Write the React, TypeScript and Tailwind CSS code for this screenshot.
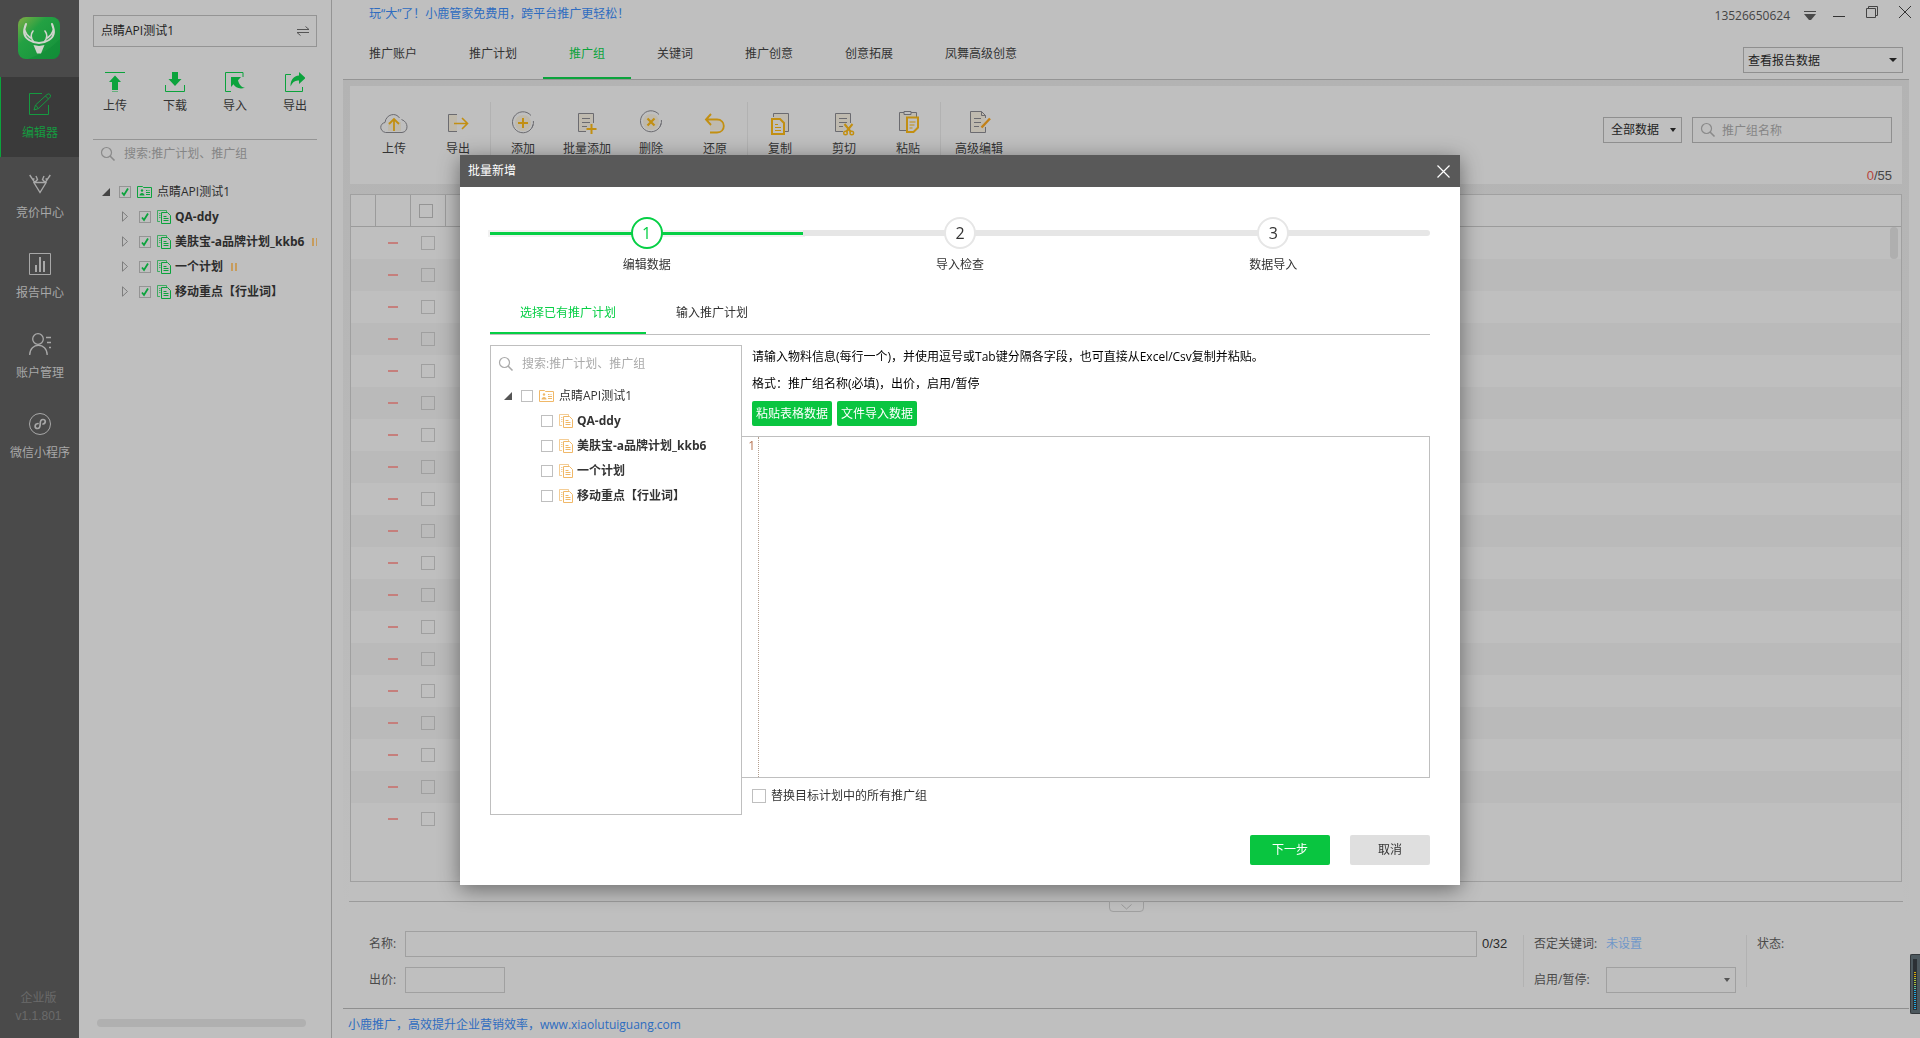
import type { ReactNode } from 'react';

/* ---------- shared pieces ---------- */

function Caret({ small = false, className = '' }: { small?: boolean; className?: string }) {
  return (
    <svg viewBox="0 0 8 4" className={`pointer-events-none ${small ? 'h-1 w-1.5' : 'h-1 w-2'} ${className}`} preserveAspectRatio="none" aria-hidden="true">
      <path d="M0 0h8L4 4z" fill="currentColor" />
    </svg>
  );
}

function SearchIcon({ className = '' }: { className?: string }) {
  return (
    <svg viewBox="0 0 16 16" className={`size-4 shrink-0 ${className}`} fill="none" stroke="currentColor" aria-hidden="true">
      <circle cx="6.5" cy="6.5" r="5" strokeWidth="1.2" />
      <path d="M10 10l4.5 4.5" strokeWidth="1.6" />
    </svg>
  );
}

function CheckBox({ label, checked = false, className }: { label: string; checked?: boolean; className: string }) {
  return (
    <span className="grid shrink-0 place-items-center">
      <input
        type="checkbox"
        aria-label={label}
        defaultChecked={checked}
        className={`col-start-1 row-start-1 block appearance-none border ${className}`}
      />
      {checked && (
        <svg viewBox="0 0 12 12" className="pointer-events-none col-start-1 row-start-1 size-3" fill="none" stroke="#0ba33c" aria-hidden="true">
          <path d="M3 6.5L5 9l4-6.500" strokeWidth="1.8" />
        </svg>
      )}
    </span>
  );
}

function AccountIcon() {
  return (
    <svg viewBox="0 0 15 12" className="h-3 w-[15px] shrink-0" fill="none" stroke="currentColor" aria-hidden="true">
      <path d="M.5 .5h5l1 1h8v10H.5z" />
      <circle cx="5" cy="4.500" r="1.200" fill="currentColor" stroke="none" />
      <path d="M2.500 9.500c0-3.500 5-3.500 5 0z" fill="currentColor" stroke="none" />
      <path d="M9 4.500h1.500M11.500 4.500h1M9 6.500h4M9 8.500h4" />
    </svg>
  );
}

function PlanIcon() {
  return (
    <svg viewBox="0 0 14 14" className="size-3.5 shrink-0" fill="none" stroke="currentColor" aria-hidden="true">
      <path d="M9.500 2V.5H.5v11H3M2 3.500h1.500M2 5.500h1.500M2 7.500h1.500" opacity=".7" />
      <path d="M4.500 2.500h6l3 3v8h-9z" />
      <path d="M6.500 6.500h3M6.500 8.500h5M6.500 10.500h5" />
    </svg>
  );
}

function Pause() {
  return (
    <svg viewBox="0 0 6 8" className="ml-2 h-2 w-1.5 shrink-0" aria-hidden="true">
      <path d="M0 0h2v8H0zM4 0h2v8H4z" fill="#c79c5c" />
    </svg>
  );
}

const plans = [
  { name: 'QA-ddy', paused: false },
  { name: '美肤宝-a品牌计划_kkb6', paused: true },
  { name: '一个计划', paused: true },
  { name: '移动重点【行业词】', paused: false },
];

/* ---------- dark navigation rail ---------- */

function NavItem({ label, active = false, children }: { label: string; active?: boolean; children: ReactNode }) {
  return (
    <button
      className={`flex h-20 w-full flex-col items-center gap-[9px] border-l pt-4 ${
        active ? 'border-[#0ba33c] bg-[#3a3a3a] text-[#159a40]' : 'border-transparent text-[#a8a8a8]'
      }`}
    >
      <svg viewBox="0 0 22 22" className="size-[22px]" fill="none" stroke="currentColor" aria-hidden="true">
        {children}
      </svg>
      <span>{label}</span>
    </button>
  );
}

function Rail() {
  return (
    <nav className="flex w-[79px] shrink-0 flex-col bg-[#4a4a4a]">
      <div className="flex h-[77px] justify-center pt-[17px] pr-px">
        <svg viewBox="0 0 42 42" className="size-[42px]" aria-label="小鹿推广">
          <defs>
            <linearGradient id="logo" x1="0" y1="0" x2="1" y2="1">
              <stop offset="0" stopColor="#84ad45" />
              <stop offset=".35" stopColor="#23a143" />
              <stop offset="1" stopColor="#149039" />
            </linearGradient>
          </defs>
          <rect width="42" height="42" rx="8" fill="url(#logo)" />
          <path d="M42 22C32 32 24 37 10 42h24a8 8 0 0 0 8-8z" fill="#0f8a35" opacity=".5" />
          <g fill="none" stroke="#d0d4cc" strokeWidth="2" strokeLinecap="round">
            <path d="M8 7c-3 7-2 13 3 16 3 2 6 3 10 3s7-1 10-3c5-3 6-9 3-16" />
            <path d="M15 14c-3 4-2.500 7 .5 10.500M27 14c3 4 2.500 7-.5 10.500M6.500 13c1.500 4 3 6 6 8M35.500 13c-1.500 4-3 6-6 8" strokeWidth="1.600" />
          </g>
          <path d="M15.500 28l5.500 1 5.500-1-3.500 8.500h-4z" fill="#d0d4cc" />
        </svg>
      </div>
      <NavItem label="编辑器" active>
        <path d="M13 .5H.5v21h19V12" />
        <path d="M5 17l1.500-5L18 1.500q2-1.500 3.200.2T20.500 5L9.500 15.500z" />
        <path d="M16.500 3l3 3M6.500 12l3 3.500" />
      </NavItem>
      <NavItem label="竞价中心">
        <path d="M4.500 9.500h13M4.500 9L11 19.500 17.500 9M.7 2l5 7.500 2.800-3L7 3M3 6h2.500M21.300 2l-5 7.500-2.800-3L15 3M19 6h-2.500" strokeWidth="1.400" />
      </NavItem>
      <NavItem label="报告中心">
        <path d="M.5 .5h21v21H.5z" />
        <path d="M7 12v7M11 4v15M15 8v11" strokeWidth="2" />
      </NavItem>
      <NavItem label="账户管理">
        <circle cx="9" cy="6" r="5.300" strokeWidth="1.300" />
        <path d="M.7 22c0-13 17.500-13 17.500 0M17 4.500h5M18 9.500h4M20 14.500h2" strokeWidth="1.300" />
      </NavItem>
      <NavItem label="微信小程序">
        <circle cx="11" cy="11" r="10.500" />
        <path d="M9 10.500c-4 .5-3.500 5 -.5 5 2 0 2.700-1.500 2.700-4.500S12 6.500 14 6.500c3 0 3 4 0 4.500" strokeWidth="1.700" strokeLinecap="round" />
      </NavItem>
      <div className="mt-auto flex flex-col items-center pr-0.5 pb-3.5 text-[#6a6a6a]">
        <span className="leading-5">企业版</span>
        <span className="font-['Liberation_Sans'] leading-4">v1.1.801</span>
      </div>
    </nav>
  );
}

/* ---------- account panel ---------- */

function PanelAction({ label, children }: { label: string; children: ReactNode }) {
  return (
    <button className="flex w-11 flex-col items-center gap-[5px] text-[#333]">
      <svg viewBox="0 0 20 20" className="size-5 text-[#0ba33c]" fill="none" stroke="currentColor" aria-hidden="true">
        {children}
      </svg>
      <span>{label}</span>
    </button>
  );
}

function AccountPanel() {
  return (
    <aside className="flex w-[253px] shrink-0 flex-col border-r border-[#949494] px-3.5 pt-[15px]">
      <button className="flex h-8 items-center justify-between border border-[#949494] px-[7px] text-[#222]">
        <span>点睛API测试1</span>
        <svg viewBox="0 0 12 10" className="h-2.5 w-3" fill="none" stroke="#555" aria-hidden="true">
          <path d="M0 3.500h12L8.500 .5M12 6.500H0l3.500 3" />
        </svg>
      </button>
      <div className="mt-[25px] flex h-[68px] justify-between border-b border-[#949494]">
        <PanelAction label="上传">
          <path d="M0 .5h20" />
          <path d="M7 18V10H4l6-6.500L16 10h-3v8zM7 19.500h6v.5H7z" fill="currentColor" stroke="none" />
        </PanelAction>
        <PanelAction label="下载">
          <path d="M.5 13v6.500h19V13" />
          <path d="M7 0h6v7h3.500L10 14 3.500 7H7z" fill="currentColor" stroke="none" />
        </PanelAction>
        <PanelAction label="导入">
          <path d="M18 5V.5H.5v19H6" />
          <path d="M6 5h10l-3 3.200c1 4 3 6.800 7 7.600-6 1.600-9.500-.3-11.500-3.500L6 15z" fill="currentColor" stroke="none" />
        </PanelAction>
        <PanelAction label="导出">
          <path d="M6 2.500H.5v17h17V15" />
          <path d="M14 0l6.500 6L14 12V8.500C10 8 7.500 10 5.500 14.500 5.500 8 8.500 4 14 3.600z" fill="currentColor" stroke="none" />
        </PanelAction>
      </div>
      <label className="flex h-7 items-center gap-2 pl-[7px] text-[#8a8a8a]">
        <SearchIcon />
        <input aria-label="搜索" placeholder="搜索:推广计划、推广组" className="min-w-0 flex-1 bg-transparent outline-none placeholder:text-[#858585]" />
      </label>
      <ul className="mt-[11px] overflow-hidden text-[#2c2c2c]">
        <li className="flex h-[25px] items-center pl-[9px]">
          <svg viewBox="0 0 8 8" className="mr-[9px] size-2" aria-hidden="true">
            <path d="M8 0v8H0z" fill="#444" />
          </svg>
          <CheckBox label="点睛API测试1" checked className="size-3 border-[#949494]" />
          <span className="ml-1.5 mr-[5px] text-[#0ba33c]">
            <AccountIcon />
          </span>
          <span>点睛API测试1</span>
        </li>
        {plans.map((p) => (
          <li key={p.name} className="flex h-[25px] items-center pl-[29px] font-bold whitespace-nowrap">
            <svg viewBox="0 0 6 11" className="mr-[11px] h-[11px] w-1.5 shrink-0" fill="none" stroke="#7d7d7d" aria-hidden="true">
              <path d="M.5 .8v9.400l5-4.700z" />
            </svg>
            <CheckBox label={p.name} checked className="size-3 border-[#949494]" />
            <span className="ml-1.5 mr-1 text-[#0ba33c]">
              <PlanIcon />
            </span>
            <span>{p.name}</span>
            {p.paused && <Pause />}
          </li>
        ))}
      </ul>
      <div className="mt-auto mr-[11px] mb-[11px] ml-1 h-2 rounded-full bg-[#b0b0b0]" />
    </aside>
  );
}

/* ---------- main area ---------- */

const tabs = ['推广账户', '推广计划', '推广组', '关键词', '推广创意', '创意拓展', '凤舞高级创意'];

function Tool({ label, wide = false, children }: { label: string; wide?: boolean; children: ReactNode }) {
  return (
    <button className={`flex flex-col items-center gap-1 pt-2 ${wide ? 'w-[76px]' : 'w-16'}`}>
      <svg viewBox="0 0 28 26" className="h-[26px] w-7" fill="none" stroke="#6b6b70" aria-hidden="true">
        {children}
      </svg>
      <span>{label}</span>
    </button>
  );
}

const gold = '#c28f12';
const sand = '#bfb59f';

function Toolbar() {
  return (
    <div className="mx-[7px] mt-1.5 flex h-[98px] justify-between bg-[#bfbfbf] text-[#333]">
      <div className="mt-4 flex h-[60px] divide-x divide-[#b2b2b2] pl-3">
        <div className="flex">
          <Tool label="上传">
            <path d="M8 22.500H5.500C-1 21-.5 13.500 5 12.500 6 4 16 2 19.500 8" />
            <path d="M21.500 9.500C29 12 28.500 22 22 22.500H8" />
            <path d="M8 12h13v9H8z" fill={sand} stroke="none" opacity=".6" />
            <path d="M14 21V9M9 14l5-5 5 5" stroke={gold} strokeWidth="1.800" />
          </Tool>
          <Tool label="导出">
            <path d="M13 4.500H4.500v17H13" fill={sand} fillOpacity=".6" />
            <path d="M10 13.500h13M18 8l5.500 5.500L18 19" stroke={gold} strokeWidth="1.600" />
          </Tool>
        </div>
        <div className="flex">
          <Tool label="添加">
            <circle cx="14" cy="13" r="8" fill={sand} stroke="none" opacity=".6" />
            <path d="M22 5.500a10.500 10.500 0 1 0 2.400 5.500M24 14.500a10 10 0 0 1-1 3" />
            <path d="M14 8v10M9 13h10" stroke={gold} strokeWidth="2" />
          </Tool>
          <Tool label="批量添加">
            <path d="M13 21.500H5.500v-18h15V13" fill={sand} fillOpacity=".5" />
            <path d="M9 8.500h8M9 12.500h8M9 16.500h5" />
            <path d="M18.500 14v10M13.500 19h10" stroke={gold} strokeWidth="2" />
          </Tool>
          <Tool label="删除">
            <circle cx="14" cy="12" r="8" fill={sand} stroke="none" opacity=".6" />
            <path d="M22 4.500a10.500 10.500 0 1 0 2.400 5.500M24 13.500a10 10 0 0 1-1 3" />
            <path d="M10.500 8.500l7 7M17.500 8.500l-7 7" stroke={gold} strokeWidth="2.200" />
          </Tool>
          <Tool label="还原">
            <path d="M9 11h12v9H9z" fill={sand} stroke="none" opacity=".5" />
            <path d="M10 4L5 9.500l5 5.500M5 9.500h11c9 0 9 13 0 13h-7" stroke={gold} strokeWidth="1.900" />
          </Tool>
        </div>
        <div className="flex">
          <Tool label="复制">
            <path d="M7.500 7V3.500h15v18H19" fill={sand} fillOpacity=".5" />
            <path d="M6 9h8l4 4v11H6z" stroke={gold} strokeWidth="2" fill="#bfbfbf" />
            <path d="M9 14.500h3M9 17.500h6M9 20.500h6" stroke={gold} strokeWidth="1.200" />
          </Tool>
          <Tool label="剪切">
            <path d="M13 21.500H5.500v-18h15V13" fill={sand} fillOpacity=".5" />
            <path d="M9 8.500h8M9 12.500h8M9 16.500h4" />
            <path d="M14.500 14l6.500 8M22.500 14L16 22" stroke={gold} strokeWidth="2" />
            <circle cx="15.500" cy="23" r="1.800" stroke={gold} strokeWidth="1.400" />
            <circle cx="21.800" cy="23" r="1.800" stroke={gold} strokeWidth="1.400" />
          </Tool>
          <Tool label="粘贴">
            <path d="M12 20.500H5.500v-18h17V7" fill={sand} fillOpacity=".5" />
            <path d="M10 4.500v-3h7v3z" fill="#bfbfbf" />
            <path d="M13 7.500h11v10l-4.500 4.500H13z" stroke={gold} strokeWidth="2" fill="#bfbfbf" />
            <path d="M15.500 12h6M15.500 15h5M15.500 18h3" stroke={gold} strokeWidth="1.200" />
          </Tool>
        </div>
        <div className="flex">
          <Tool label="高级编辑" wide>
            <path d="M20.500 17v5.500h-15v-21h11l4 4V8" fill={sand} fillOpacity=".5" />
            <path d="M16.500 1.500v4h4M9 8.500h7M9 12.500h7M9 16.500h5" />
            <path d="M25 8.500l-8.500 9" stroke="#c28018" strokeWidth="2.400" />
          </Tool>
        </div>
      </div>
      <div className="flex flex-col items-end justify-between pt-[31px] pr-2.5">
        <div className="flex gap-2.5">
          <div className="grid items-center">
            <select aria-label="数据范围" className="col-start-1 row-start-1 h-[26px] w-[79px] appearance-none border border-[#8f8f8f] px-[7px] text-[#222]">
              <option>全部数据</option>
            </select>
            <Caret small className="col-start-1 row-start-1 mr-1.5 justify-self-end text-[#222]" />
          </div>
          <label className="flex h-[26px] w-[200px] items-center gap-1.5 border border-[#8f8f8f] pl-[7px] text-[#8a8a8a]">
            <SearchIcon />
            <input aria-label="推广组名称" placeholder="推广组名称" className="min-w-0 flex-1 bg-transparent pt-px outline-none placeholder:text-[#858585]" />
          </label>
        </div>
        <div className="font-['Liberation_Sans'] text-[13px] leading-4 text-[#444]">
          <span className="text-[#b8463c]">0</span>/55
        </div>
      </div>
    </div>
  );
}

const rows = Array.from({ length: 19 }, (_, i) => i + 1);

function GroupTable() {
  return (
    <div className="mx-[7px] mt-2.5 flex min-h-0 flex-1 overflow-hidden border border-[#a0a0a0] bg-[#bfbfbf]">
      <table className="w-full table-fixed border-separate border-spacing-0 self-start">
        <colgroup>
          <col className="w-[25px]" />
          <col className="w-[35px]" />
          <col className="w-[35px]" />
          <col />
        </colgroup>
        <thead>
          <tr className="h-8">
            <th className="border-r border-b border-[#9b9b9b]" />
            <th className="border-r border-b border-[#9b9b9b]" />
            <th className="border-r border-b border-[#9b9b9b] p-0 pl-2">
              <div className="flex">
                <CheckBox label="全选" className="size-3.5 border-[#949494]" />
              </div>
            </th>
            <th className="border-b border-[#9b9b9b]" />
          </tr>
        </thead>
        <tbody>
          {rows.map((n) => (
            <tr key={n} className="h-8 even:bg-[#bababa]">
              <td className="p-0" />
              <td className="p-0 pr-0.5">
                <div className="mx-auto h-0.5 w-2.5 bg-[#c57f7c]" />
              </td>
              <td className="p-0 pr-0.5">
                <CheckBox label={`第${n}行`} className="size-3.5 border-[#9f9f9f]" />
              </td>
              <td className="p-0">
                {n === 1 && <div className="mr-[3px] ml-auto h-8 w-2 rounded-full bg-[#afafaf]" />}
              </td>
            </tr>
          ))}
        </tbody>
      </table>
    </div>
  );
}

function DetailForm() {
  return (
    <section className="mx-1.5 bg-[#bfbfbf] pt-[19px] text-[#4a4a4a]">
      <div className="flex justify-center border-t border-[#9b9b9b]">
        <button aria-label="收起" className="-mt-px grid h-[11px] w-[35px] place-items-center rounded-b-sm border border-[#a0a0a0] bg-[#bfbfbf]">
          <svg viewBox="0 0 11 6" className="h-1.5 w-[11px]" fill="none" stroke="#999" aria-hidden="true">
            <path d="M.5 .5l5 4.500 5-4.500" />
          </svg>
        </button>
      </div>
      <div className="flex h-24 pt-[19px] pl-5">
        <div className="flex flex-1 flex-col gap-2.5">
          <label className="flex h-[26px] items-center">
            <span className="w-9">名称:</span>
            <input className="h-[26px] min-w-0 flex-1 border border-[#a0a0a0] px-1.5 outline-none" />
            <span className="ml-[5px] w-[41px] font-['Liberation_Sans'] text-[13px] text-[#2a2a2a]">0/32</span>
          </label>
          <label className="flex h-[26px] items-center">
            <span className="w-9">出价:</span>
            <input className="h-[26px] w-[100px] border border-[#a0a0a0] px-1.5 outline-none" />
          </label>
        </div>
        <div className="mt-1 h-[52px] w-px bg-[#b2b2b2]" />
        <div className="flex w-[222px] flex-col gap-2.5 pl-2.5">
          <div className="flex h-[26px] items-center">
            <span className="w-[72px]">否定关键词:</span>
            <a href="#negative" className="text-[#6f97c9]">
              未设置
            </a>
          </div>
          <label className="flex h-[26px] items-center">
            <span className="w-[72px]">启用/暂停:</span>
            <span className="grid items-center">
              <select className="col-start-1 row-start-1 h-[26px] w-[130px] appearance-none border border-[#a0a0a0] px-1.5" />
              <Caret small className="col-start-1 row-start-1 mr-1.5 justify-self-end text-[#555]" />
            </span>
          </label>
        </div>
        <div className="mt-1 h-[52px] w-px bg-[#b2b2b2]" />
        <div className="flex h-[26px] w-[156px] items-center pl-2.5">状态:</div>
      </div>
    </section>
  );
}

function Main() {
  return (
    <main className="flex min-w-0 flex-1 flex-col">
      <div className="flex h-7 items-start justify-between pr-[9px] pl-[37px]">
        <a href="#promo" className="pt-[5px] leading-[18px] text-[#2e6cc0]">
          玩“大”了！小鹿管家免费用，跨平台推广更轻松！
        </a>
        <div className="flex items-start text-[#444]">
          <span className="pt-[7px] leading-[18px]">13526650624</span>
          <button aria-label="菜单" className="mt-[11px] ml-3.5">
            <svg viewBox="0 0 12 9" className="h-[9px] w-3" aria-hidden="true">
              <path d="M0 0h12v1H0zM0 3h12L7 9H5z" fill="#4a4a4a" />
            </svg>
          </button>
          <button aria-label="最小化" className="mt-2.5 ml-[17px]">
            <svg viewBox="0 0 12 12" className="size-3" stroke="#333" aria-hidden="true">
              <path d="M0 6.500h12" />
            </svg>
          </button>
          <button aria-label="还原窗口" className="mt-1.5 ml-[21px]">
            <svg viewBox="0 0 12 12" className="size-3" fill="none" stroke="#444" aria-hidden="true">
              <path d="M.5 2.500h9v9h-9zM2.500 2.500v-2h9v9h-2" />
            </svg>
          </button>
          <button aria-label="关闭" className="mt-1.5 ml-[21px]">
            <svg viewBox="0 0 12 12" className="size-3" stroke="#333" aria-hidden="true">
              <path d="M0 0l12 12M12 0L0 12" />
            </svg>
          </button>
        </div>
      </div>
      <div className="mx-[11px] flex h-13 justify-between border-b border-[#949494]">
        <div className="flex" role="tablist">
          {tabs.map((t) => (
            <button
              key={t}
              role="tab"
              aria-selected={t === '推广组'}
              className={`border-b-2 px-[26px] pt-[3px] ${
                t === '推广组' ? 'border-b-[#0ba33c] text-[#0ba33c]' : 'border-b-transparent text-[#333]'
              }`}
            >
              {t}
            </button>
          ))}
        </div>
        <div className="mt-[19px] mr-1.5 grid h-[26px] items-center">
          <select aria-label="报告数据" className="col-start-1 row-start-1 h-[26px] w-40 appearance-none border border-[#8f8f8f] px-1 pt-px text-[#222]">
            <option>查看报告数据</option>
          </select>
          <Caret className="col-start-1 row-start-1 mr-1.5 justify-self-end text-[#222]" />
        </div>
      </div>
      <div className="mx-[11px] flex min-h-0 flex-1 flex-col border-b border-[#8f8f8f] bg-linear-to-b from-[#b3b3b3] to-[#bfbfbf] to-90%">
        <Toolbar />
        <GroupTable />
        <DetailForm />
      </div>
      <footer className="flex h-[29px] items-center px-4 pt-0.5">
        <a href="#home" className="text-[#2e6cc0]">
          小鹿推广，高效提升企业营销效率，www.xiaolutuiguang.com
        </a>
      </footer>
    </main>
  );
}

/* ---------- dialog ---------- */

const steps = ['编辑数据', '导入检查', '数据导入'];

function Stepper() {
  return (
    <ol className="grid grid-cols-3">
      {steps.map((s, i) => (
        <li key={s} className="flex flex-col items-center">
          <div className="grid w-full place-items-center">
            <div className={`col-start-1 row-start-1 h-1.5 w-full bg-[#e6e6e6] ${i === 0 ? 'rounded-l-sm' : ''} ${i === 2 ? 'rounded-r-sm' : ''}`} />
            {i === 0 && <div className="col-start-1 row-start-1 h-[3px] w-full bg-[#06cf45] shadow-[0_0_0_2px_#f2f2f2]" />}
            <div
              className={`z-10 col-start-1 row-start-1 grid size-8 place-items-center rounded-full border-2 bg-white text-base ${
                i === 0 ? 'border-[#06cf45] text-[#06cf45]' : 'border-[#e6e6e6] text-[#333]'
              }`}
            >
              {i + 1}
            </div>
          </div>
          <span className="mt-[7px] text-[#333]">{s}</span>
        </li>
      ))}
    </ol>
  );
}

function PlanPicker() {
  return (
    <div className="w-[252px] shrink-0 border border-[#bfbfbf]">
      <label className="flex h-9 items-center gap-2 pl-[7px] text-[#aaa]">
        <SearchIcon />
        <input aria-label="搜索" placeholder="搜索:推广计划、推广组" className="min-w-0 flex-1 outline-none placeholder:text-[#aaa]" />
      </label>
      <ul className="mt-px text-[#333]">
        <li className="flex h-[25px] items-center pl-[13px]">
          <svg viewBox="0 0 8 8" className="mr-[9px] size-2" aria-hidden="true">
            <path d="M8 0v8H0z" fill="#555" />
          </svg>
          <CheckBox label="点睛API测试1" className="size-3 border-[#bfbfbf]" />
          <span className="ml-1.5 mr-[5px] text-[#f0b868]">
            <AccountIcon />
          </span>
          <span>点睛API测试1</span>
        </li>
        {plans.map((p) => (
          <li key={p.name} className="flex h-[25px] items-center pl-[50px] font-bold">
            <CheckBox label={p.name} className="size-3 border-[#bfbfbf]" />
            <span className="ml-1.5 mr-1 text-[#f0b868]">
              <PlanIcon />
            </span>
            <span>{p.name}</span>
          </li>
        ))}
      </ul>
    </div>
  );
}

function Dialog() {
  return (
    <div className="fixed inset-0 flex items-center justify-center pt-0.5">
      <div role="dialog" aria-label="批量新增" className="w-[1000px] bg-white shadow-[0_4px_20px_rgba(0,0,0,0.45)]">
        <div className="flex h-8 items-center justify-between bg-[#595959] pr-2.5 pl-2 text-white">
          <h2>批量新增</h2>
          <button aria-label="关闭">
            <svg viewBox="0 0 13 13" className="size-[13px]" stroke="white" strokeWidth="1.200" aria-hidden="true">
              <path d="M.5 .5l12 12M12.500 .5l-12 12" />
            </svg>
          </button>
        </div>
        <div className="px-[30px] pt-[30px] pb-5">
          <Stepper />
          <div className="mt-[18px] flex h-[43px] border-b border-[#bfbfbf]" role="tablist">
            <button role="tab" aria-selected="true" className="border-y-2 border-t-transparent border-b-[#06cf45] px-[30px] text-[#06cf45]">
              选择已有推广计划
            </button>
            <button role="tab" aria-selected="false" className="px-[30px] text-[#333]">
              输入推广计划
            </button>
          </div>
          <div className="mt-2.5 flex">
            <PlanPicker />
            <div className="flex flex-1 flex-col">
              <div className="pl-2.5 text-black">
                <p className="mt-[3px] leading-[18px]">请输入物料信息(每行一个)，并使用逗号或Tab键分隔各字段，也可直接从Excel/Csv复制并粘贴。</p>
                <p className="mt-[9px] leading-[18px]">格式：推广组名称(必填)，出价，启用/暂停</p>
                <div className="mt-2 flex gap-[5px]">
                  <button className="h-[25px] w-20 rounded-xs bg-[#09c540] text-white">粘贴表格数据</button>
                  <button className="h-[25px] w-20 rounded-xs bg-[#09c540] text-white">文件导入数据</button>
                </div>
              </div>
              <div className="mt-2.5 flex h-[342px] border border-l-0 border-[#bfbfbf]">
                <div className="w-[17px] border-r border-dotted border-[#b5a090] pr-[3px] text-right text-[#b5714f]">1</div>
                <textarea aria-label="物料信息" className="flex-1 resize-none p-1 outline-none" />
              </div>
              <label className="mt-[9px] mb-2.5 ml-2.5 flex h-[18px] items-center gap-[5px] text-[#333]">
                <CheckBox label="替换目标计划中的所有推广组" className="size-3.5 border-[#bfbfbf]" />
                替换目标计划中的所有推广组
              </label>
            </div>
          </div>
          <div className="mt-5 flex justify-end gap-5">
            <button className="h-[30px] w-20 rounded-xs bg-[#09c540] text-white">下一步</button>
            <button className="h-[30px] w-20 rounded-xs bg-[#dfdfdf] text-[#333]">取消</button>
          </div>
        </div>
      </div>
    </div>
  );
}

/* ---------- level meter docked at the window edge ---------- */

function Meter() {
  return (
    <div className="fixed right-0 bottom-6 h-[60px] w-2.5 rounded-l-xs border border-r-0 border-[#33383c] bg-[#4c585e]">
      <svg viewBox="0 0 9 58" className="h-[58px] w-[9px]" aria-hidden="true">
        <path d="M2 4h4v51H2z" fill="#2b3035" />
        {Array.from({ length: 19 }, (_, i) => (
          <path key={i} d={`M3 ${17 + i * 2}h2v1H3z`} fill={i < 3 ? '#d9a90c' : i < 7 ? '#a9c23c' : i < 9 ? '#5fc09a' : '#25a8dc'} />
        ))}
      </svg>
    </div>
  );
}

export default function App() {
  return (
    <div className="flex h-screen min-h-[900px] bg-[#bfbfbf] font-['Open_Sans','Noto_Sans_CJK_SC',sans-serif] text-xs leading-[18px]">
      <Rail />
      <AccountPanel />
      <Main />
      <Dialog />
      <Meter />
    </div>
  );
}
